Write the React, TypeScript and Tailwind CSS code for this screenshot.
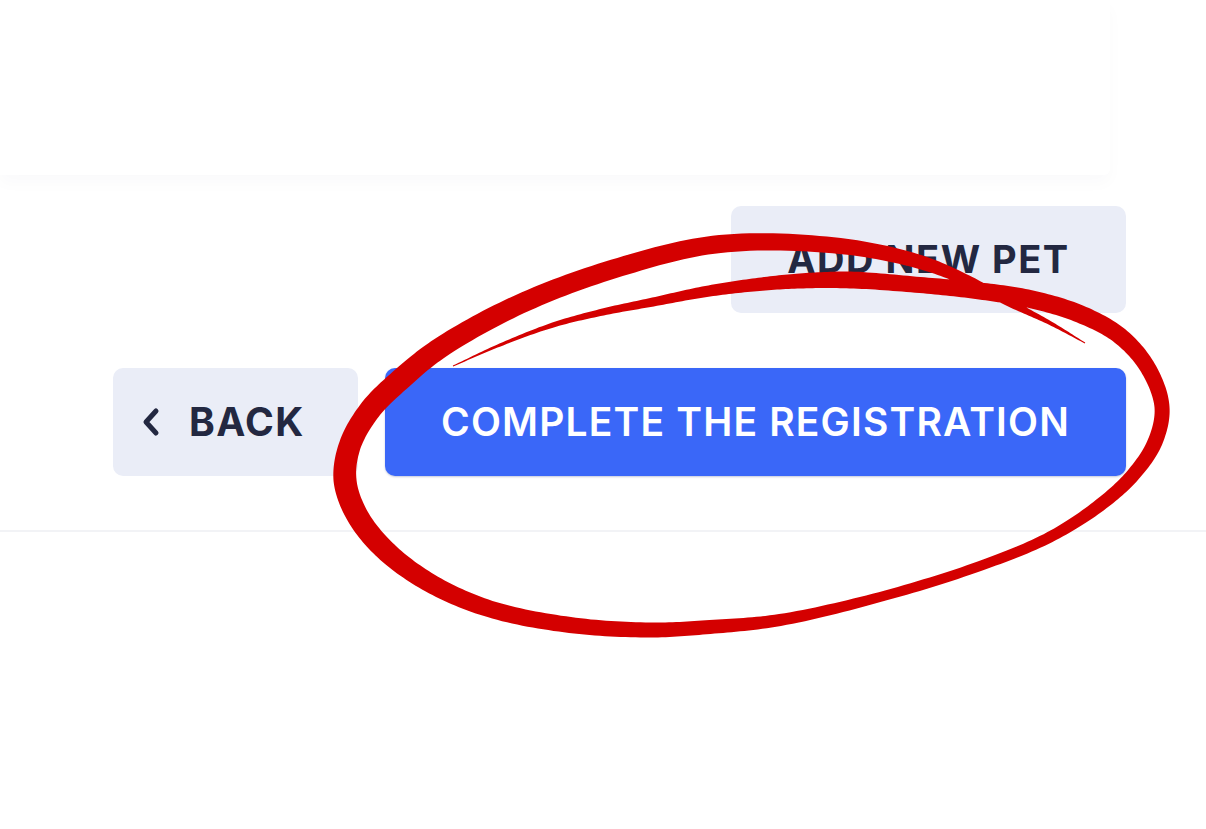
import React from 'react'

// centre line of the hand-drawn marker loop: x, y, stroke width
const loop: [number, number, number][] = [
  [453, 366, 1],
  [500, 345, 3],
  [553, 325, 5],
  [603, 312, 7],
  [653, 302, 9],
  [703, 292, 11],
  [753, 285, 13],
  [800, 281, 15],
  [850, 280, 17],
  [920, 285, 16],
  [980, 291, 17],
  [1030, 299, 18],
  [1080, 314, 18],
  [1120, 336, 17],
  [1148, 368, 16],
  [1162, 407, 15],
  [1155, 442, 15],
  [1133, 475, 14],
  [1100, 505, 13],
  [1050, 537, 11],
  [980, 566, 10],
  [880, 597, 10],
  [780, 620, 12],
  [710, 627, 14],
  [650, 630, 15],
  [570, 625, 16],
  [490, 609, 17],
  [430, 583, 19],
  [385, 550, 21],
  [357, 515, 22],
  [345, 480, 23],
  [350, 445, 22],
  [370, 410, 22],
  [400, 380, 22],
  [440, 348, 21],
  [520, 304, 20],
  [620, 267, 19],
  [720, 244, 18],
  [840, 246, 16],
  [920, 262, 14],
  [970, 282, 11],
  [1010, 303, 8],
  [1050, 323, 4],
  [1085, 343, 1],
]

type P = [number, number, number]

// centripetal catmull-rom, sampled, then offset both sides by half the width
function ribbon(pts: P[], steps = 16) {
  const n = pts.length
  const get = (i: number) => pts[Math.max(0, Math.min(n - 1, i))]
  const samples: P[] = []
  const tj = (ti: number, a: P, b: P) => ti + Math.pow(Math.hypot(b[0] - a[0], b[1] - a[1]) || 0.01, 0.5)
  const lerp = (a: number[], b: number[], t0: number, t1: number, t: number) =>
    a.map((v, k) => ((t1 - t) / (t1 - t0)) * v + ((t - t0) / (t1 - t0)) * b[k])

  for (let i = 0; i < n - 1; i++) {
    let p0 = get(i - 1)
    const p1 = get(i)
    const p2 = get(i + 1)
    let p3 = get(i + 2)
    if (i === 0) p0 = [2 * p1[0] - p2[0], 2 * p1[1] - p2[1], p1[2]]
    if (i === n - 2) p3 = [2 * p2[0] - p1[0], 2 * p2[1] - p1[1], p2[2]]
    const t0 = 0
    const t1 = tj(t0, p0, p1)
    const t2 = tj(t1, p1, p2)
    const t3 = tj(t2, p2, p3)
    for (let s = 0; s < steps; s++) {
      const t = t1 + ((t2 - t1) * s) / steps
      const a1 = lerp(p0, p1, t0, t1, t)
      const a2 = lerp(p1, p2, t1, t2, t)
      const a3 = lerp(p2, p3, t2, t3, t)
      const b1 = lerp(a1, a2, t0, t2, t)
      const b2 = lerp(a2, a3, t1, t3, t)
      const c = lerp(b1, b2, t1, t2, t)
      const u = s / steps
      samples.push([c[0], c[1], p1[2] + (p2[2] - p1[2]) * u])
    }
  }
  samples.push(pts[n - 1])

  const left: string[] = []
  const right: string[] = []
  samples.forEach((p, i) => {
    const a = samples[Math.max(0, i - 1)]
    const b = samples[Math.min(samples.length - 1, i + 1)]
    const dx = b[0] - a[0]
    const dy = b[1] - a[1]
    const len = Math.hypot(dx, dy) || 1
    const nx = -dy / len
    const ny = dx / len
    const h = p[2] / 2
    left.push(`${(p[0] + nx * h).toFixed(2)},${(p[1] + ny * h).toFixed(2)}`)
    right.push(`${(p[0] - nx * h).toFixed(2)},${(p[1] - ny * h).toFixed(2)}`)
  })
  return `M${left.join(' L')} L${right.reverse().join(' L')} Z`
}

function ChevronLeft() {
  return (
    <svg width="20" height="30" viewBox="0 0 20 30" fill="none">
      <path d="M15 4 L5 15 L15 26" stroke="#232841" strokeWidth="5" strokeLinecap="round" strokeLinejoin="round" />
    </svg>
  )
}

export default function App() {
  return (
    <div className="relative w-full h-[829px] bg-white overflow-hidden" style={{ fontFamily: 'Inter, "Noto Sans", sans-serif' }}>
      <div className="w-[1110px] h-[175px] bg-white rounded-br-md shadow-[0_8px_16px_rgba(30,40,90,0.022)]" />

      <div className="flex flex-col items-end pr-[80px]">
        <button className="mt-[31px] w-[395px] h-[107px] rounded-[10px] bg-[#eaedf7] text-[#232841] text-[38px] font-bold tracking-[0.04em]">
          ADD NEW PET
        </button>

        <div className="mt-[55px] flex gap-[27px]">
          <button className="w-[245px] h-[108px] rounded-[10px] bg-[#eaedf7] text-[#232841] flex items-center pl-[28px] gap-[28px]">
            <ChevronLeft />
            <span className="text-[39px] font-bold tracking-[0.035em]">BACK</span>
          </button>
          <button className="w-[741px] h-[108px] rounded-[10px] bg-[#3a67f8] text-white text-[39px] font-semibold tracking-[0.03em] shadow-[0_1px_2px_rgba(20,40,120,0.25)]">
            COMPLETE THE REGISTRATION
          </button>
        </div>
      </div>

      <div className="mt-[54px] h-[2px] w-full bg-[#f2f3f6]" />

      <svg className="absolute inset-0 pointer-events-none" width="1206" height="829" viewBox="0 0 1206 829">
        <path d={ribbon(loop)} fill="#d40000" fillRule="nonzero" />
      </svg>
    </div>
  )
}
